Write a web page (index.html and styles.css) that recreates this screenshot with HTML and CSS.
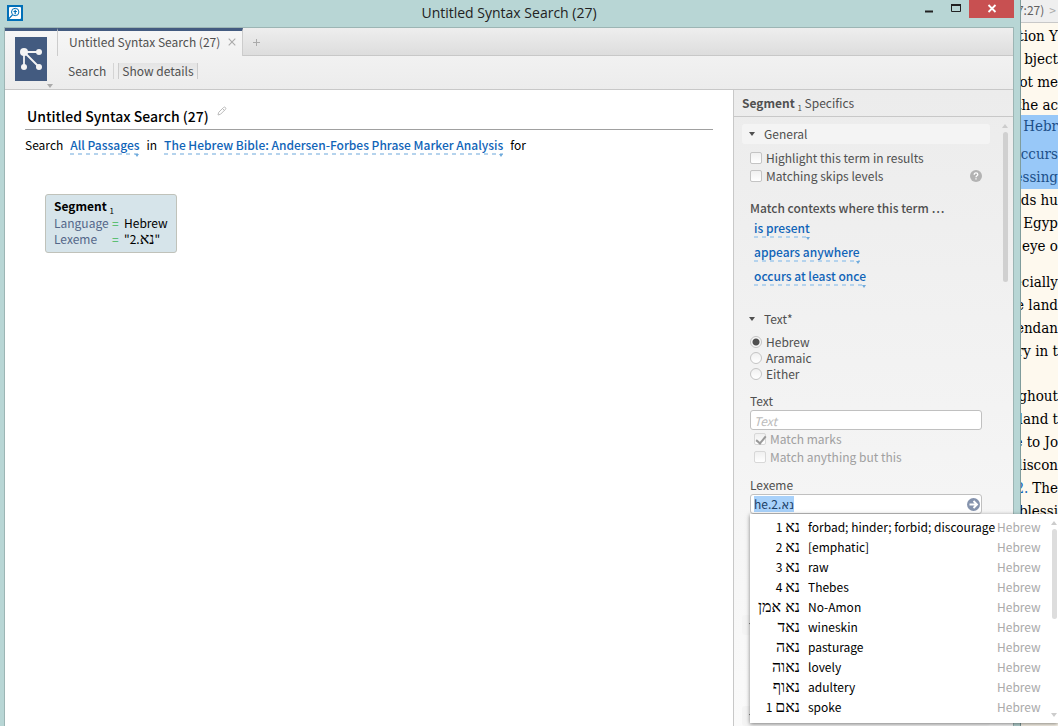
FILE: index.html
```html
<!DOCTYPE html>
<html lang="en">
<head>
  <meta charset="UTF-8">
  <meta name="viewport" content="width=device-width, initial-scale=1.0">
  <title>Untitled Syntax Search (27)</title>
  <link rel="stylesheet" href="styles.css">
</head>
<body>
  <div class="window">
    <div class="titlebar">
      <svg class="app-logo" viewBox="0 0 16 16" width="16" height="16">
        <rect width="16" height="16" fill="#0070b8"/>
        <rect x="2" y="2" width="12" height="12" rx="1" fill="#fff"/>
        <circle cx="8.200" cy="7" r="3.700" fill="none" stroke="#0070b8" stroke-width="1"/>
        <path d="M8.200 4.800v4.400M6.500 6.500h3.400M5.500 9.800L2 13.500" stroke="#0070b8" stroke-width="1.200" fill="none"/>
      </svg>
      <span class="window-title">Untitled Syntax Search (27)</span>
      <div class="window-buttons">
        <button class="win-btn" aria-label="Minimize">
          <svg viewBox="0 0 10 10" width="10" height="10"><path d="M1 7.500h8" stroke="#222" stroke-width="2"/></svg>
        </button>
        <button class="win-btn" aria-label="Maximize">
          <svg viewBox="0 0 10 10" width="10" height="10"><path d="M.5 1.500h9v6h-9z" stroke="#222" fill="none"/><path d="M0 1h10" stroke="#222" stroke-width="2"/></svg>
        </button>
        <button class="win-btn win-close" aria-label="Close">
          <svg viewBox="0 0 10 10" width="10" height="10"><path d="M1.500 1l7 7M8.500 1l-7 7" stroke="#fff" stroke-width="1.800"/></svg>
        </button>
      </div>
    </div>

    <div class="client">
      <header class="header">
        <button class="panel-menu" aria-label="Panel menu">
          <svg class="panel-icon" viewBox="0 0 32 44" width="32" height="44">
            <rect width="32" height="44" fill="#435b80"/>
            <path d="M9 15h15M9 15v15M9 15l15 15" stroke="#f4f4f4" stroke-width="1.800" fill="none"/>
            <g fill="#f4f4f4">
              <circle cx="9" cy="15" r="4"/>
              <circle cx="24" cy="15" r="3"/>
              <circle cx="9" cy="30" r="3"/>
              <circle cx="24" cy="30" r="3"/>
            </g>
          </svg>
          <span class="corner-arrow"></span>
        </button>
        <div class="header-main">
          <div class="tabs">
            <div class="tab">
              <span>Untitled Syntax Search (27)</span>
              <button class="icon-btn" aria-label="Close tab">
                <svg viewBox="0 0 8 8" width="8" height="8"><path d="M.7.7l6.600 6.600M7.300.7L.7 7.300" stroke="#aaa" stroke-width="1.100"/></svg>
              </button>
            </div>
            <div class="tab-rest">
              <button class="icon-btn" aria-label="New tab">
                <svg viewBox="0 0 8 8" width="8" height="8"><path d="M4.500 1v7M1 4.500h7" stroke="#aaa"/></svg>
              </button>
            </div>
          </div>
          <div class="toolbar">
            <button class="tool">Search</button>
            <span class="divider"></span>
            <button class="tool active">Show details</button>
          </div>
        </div>
      </header>

      <div class="content">
        <main class="editor">
          <div class="doc-title">
            <h1>Untitled Syntax Search (27)</h1>
            <svg viewBox="0 0 10 10" width="10" height="10"><path d="M1 9l.7-2.700L6.500 1.500q1-.9 1.900 0t0 1.900L3.600 8.200zM5.500 2.500l2 2" stroke="#bbb" fill="none"/></svg>
          </div>
          <div class="query">
            <span>Search</span>
            <a class="picker" href="#">All Passages</a>
            <span>in</span>
            <a class="picker" href="#">The Hebrew Bible: Andersen-Forbes Phrase Marker Analysis</a>
            <span>for</span>
          </div>
          <div class="term">
            <div class="term-name"><b>Segment</b> <small>1</small></div>
            <div class="term-row"><span class="key">Language</span><span class="eq">=</span><span>Hebrew</span></div>
            <div class="term-row"><span class="key">Lexeme</span><span class="eq">=</span><span>"2.<span class="heb">נא</span>"</span></div>
          </div>
        </main>

        <aside class="specifics">
          <div class="specifics-head"><b>Segment</b> <small>1</small> Specifics</div>
          <div class="specifics-body">
            <div class="scrollbar"><span class="scroll-up"></span><span class="thumb"></span></div>

            <div class="section raised"><span class="twisty"></span>General</div>
            <div class="checks">
              <label class="option"><input type="checkbox">Highlight this term in results</label>
              <div class="option-line">
                <label class="option"><input type="checkbox">Matching skips levels</label>
                <svg viewBox="0 0 12 12" width="12" height="12"><circle cx="6" cy="6" r="6" fill="#b3b3b3"/><path d="M4.200 4.700q0-1.900 1.800-1.900t1.800 1.600q0 .8-.9 1.400t-.9 1.400M6 8.200v1.300" stroke="#fff" stroke-width="1.300" fill="none"/></svg>
              </div>
            </div>

            <div class="contexts">
              <span class="contexts-title">Match contexts where this term …</span>
              <a class="picker" href="#">is present</a>
              <a class="picker" href="#">appears anywhere</a>
              <a class="picker" href="#">occurs at least once</a>
            </div>

            <div class="section"><span class="twisty"></span>Text*</div>
            <div class="radios">
              <label class="option"><input type="radio" name="language" checked>Hebrew</label>
              <label class="option"><input type="radio" name="language">Aramaic</label>
              <label class="option"><input type="radio" name="language">Either</label>
            </div>

            <div class="field">
              <label for="text">Text</label>
              <input class="box" type="text" id="text" placeholder="Text">
              <div class="sub-checks">
                <label class="option"><input type="checkbox" checked disabled>Match marks</label>
                <label class="option"><input type="checkbox" disabled>Match anything but this</label>
              </div>
            </div>

            <div class="field combo">
              <label for="lexeme">Lexeme</label>
              <div class="box combo-box">
                <input type="text" id="lexeme" value="he.2.נא">
                <button class="icon-btn" aria-label="Go">
                  <svg viewBox="0 0 13 13" width="13" height="13"><circle cx="6.500" cy="6.500" r="6.500" fill="#8593ad"/><path d="M2.500 6.500h7M6.500 3l3.500 3.500L6.500 10" stroke="#fff" stroke-width="1.900" fill="none"/></svg>
                </button>
              </div>
              <div class="menu">
                <ul class="menu-list">
                  <li><span class="lemma">1 <span class="heb">נא</span></span><span class="gloss">forbad; hinder; forbid; discourage</span><span class="lang">Hebrew</span></li>
                  <li><span class="lemma">2 <span class="heb">נא</span></span><span class="gloss">[emphatic]</span><span class="lang">Hebrew</span></li>
                  <li><span class="lemma">3 <span class="heb">נא</span></span><span class="gloss">raw</span><span class="lang">Hebrew</span></li>
                  <li><span class="lemma">4 <span class="heb">נא</span></span><span class="gloss">Thebes</span><span class="lang">Hebrew</span></li>
                  <li><span class="lemma"><span class="heb">נא אמן</span></span><span class="gloss">No-Amon</span><span class="lang">Hebrew</span></li>
                  <li><span class="lemma"><span class="heb">נאד</span></span><span class="gloss">wineskin</span><span class="lang">Hebrew</span></li>
                  <li><span class="lemma"><span class="heb">נאה</span></span><span class="gloss">pasturage</span><span class="lang">Hebrew</span></li>
                  <li><span class="lemma"><span class="heb">נאוה</span></span><span class="gloss">lovely</span><span class="lang">Hebrew</span></li>
                  <li><span class="lemma"><span class="heb">נאוף</span></span><span class="gloss">adultery</span><span class="lang">Hebrew</span></li>
                  <li><span class="lemma">1 <span class="heb">נאם</span></span><span class="gloss">spoke</span><span class="lang">Hebrew</span></li>
                </ul>
                <div class="menu-scroll"><span class="scroll-up"></span><span class="thumb"></span><span class="scroll-down"></span></div>
              </div>
            </div>

            <div class="section raised"><span class="twisty"></span></div>
            <div class="section raised"><span class="twisty"></span></div>
          </div>
        </aside>
      </div>
    </div>
  </div>

  <!-- Bible text behind the search window -->
  <div class="reader">
    <div class="reader-bar">7:27) <span>&gt;</span></div>
    <div class="reader-text">
      <p>tion Y</p>
      <p>bject</p>
      <p>not me</p>
      <p>the ac</p>
      <div class="selected">
        <h2>Hebr</h2>
        <p>ccurs</p>
        <p>essing</p>
      </div>
      <p>nds hu</p>
      <p>r Egyp</p>
      <p>s eye o</p>
      <p class="para">ecially</p>
      <p>e land</p>
      <p>endan</p>
      <p>ry in t</p>
      <p class="para verse">ghout</p>
      <p>land t</p>
      <p>e to Jo</p>
      <p>discon</p>
      <p><a href="#">2.</a> The</p>
      <p>blessi</p>
    </div>
  </div>
</body>
</html>
```

FILE: styles.css
```css
* {
  margin: 0;
  padding: 0;
  box-sizing: border-box;
}

body {
  display: flex;
  height: 100vh;
  overflow: hidden;
  background: #fef9ee;
  font-family: "Noto Sans CJK SC", "DejaVu Sans", sans-serif;
  font-size: 12px;
  line-height: 16px;
  color: #000;
}

button,
input {
  font: inherit;
  color: inherit;
  background: none;
  border: none;
  outline: none;
}

svg {
  display: block;
  flex: none;
}

small {
  font-size: 8px;
  vertical-align: -3px;
  line-height: 8px;
}

a {
  color: #1064b8;
  text-decoration: none;
}

.heb {
  font-family: "Liberation Serif", serif;
  font-size: 16px;
  line-height: 12px;
}

/* Window frame */
.window {
  flex: 1;
  min-width: 0;
  display: flex;
  flex-direction: column;
  position: relative;
  z-index: 1;
  padding: 0 6px 0 4px;
  background: #b8d6d5;
  border-right: 1px solid #7f9c9c;
}

.titlebar {
  height: 27px;
  display: flex;
  align-items: center;
  padding: 0 0 2px 3px;
}

.window-title {
  flex: 1;
  padding-left: 80px;
  text-align: center;
  font-family: "Open Sans", sans-serif;
  font-size: 14px;
  color: #222;
}

.window-buttons {
  display: flex;
  align-self: flex-start;
}

.win-btn {
  width: 27px;
  height: 18px;
  display: flex;
  align-items: center;
  justify-content: center;
}

.win-close {
  width: 45px;
  background: #c85051;
}

.client {
  flex: 1;
  min-height: 0;
  display: flex;
  flex-direction: column;
  border: 1px solid #9cb5b4;
  border-bottom: none;
  background: #fff;
}

/* Tabs and toolbar */
.header {
  display: flex;
  height: 62px;
  flex: none;
  background: linear-gradient(#f6f6f6, #ececec);
  border-bottom: 1px solid #c8c8c8;
  color: #505050;
}

.panel-menu {
  width: 52px;
  padding: 6px 0 0 10px;
  border-top: 3px solid #435b80;
  display: flex;
  align-items: flex-start;
}

.corner-arrow {
  align-self: flex-end;
  margin-bottom: 1px;
  border: 3px solid transparent;
  border-top: 4px solid #aaa;
  border-bottom: none;
}

.header-main {
  flex: 1;
  display: flex;
  flex-direction: column;
}

.tabs {
  display: flex;
  height: 28px;
}

.tab {
  display: flex;
  align-items: center;
  gap: 8px;
  padding: 0 6px 4px 11px;
  border-top: 3px solid #435b80;
  border-left: 1px solid #ccc;
  border-right: 1px solid #ccc;
}

.icon-btn {
  display: flex;
  align-items: center;
}

.tab-rest {
  flex: 1;
  display: flex;
  padding-left: 9px;
  background: linear-gradient(#eee, #ddd);
  border-bottom: 1px solid #c8c8c8;
}

.toolbar {
  flex: 1;
  display: flex;
  align-items: center;
  padding: 0 0 3px 11px;
}

.tool.active {
  padding: 0 3px;
  border-left: 1px solid #ccc;
  border-right: 1px solid #ccc;
  background: linear-gradient(#e4e4e4, #f0f0f0);
}

.divider {
  width: 1px;
  height: 16px;
  margin: 0 4px 0 7px;
  background: #d4d4d4;
}

/* Query editor */
.content {
  flex: 1;
  min-height: 0;
  display: flex;
}

.editor {
  flex: 1;
  min-width: 0;
  padding: 14px 20px;
}

.doc-title {
  display: flex;
  gap: 8px;
  height: 26px;
  padding-left: 2px;
  border-bottom: 1px solid #a0a0a0;
}

.doc-title svg {
  margin-top: 2px;
}

h1 {
  font-size: 14px;
  font-weight: 500;
  line-height: 24px;
}

.query {
  display: flex;
  gap: 7px;
  margin-top: 7px;
  white-space: nowrap;
}

.picker {
  position: relative;
  font-weight: 500;
  height: 18px;
  background: repeating-linear-gradient(90deg, #b5d3ed 0 4px, transparent 4px 8px) left bottom / 100% 2px no-repeat;
}

.picker::after {
  content: "";
  position: absolute;
  right: 0;
  bottom: -2px;
  border: 2px solid transparent;
  border-top: 3px solid #6fabdc;
  border-bottom: none;
}

.term {
  width: max-content;
  margin: 39px 0 0 20px;
  padding: 3px 8px 5px;
  border: 1px solid #c0c2ba;
  border-radius: 3px;
  background: #d6e4ea;
}

.term-row {
  display: flex;
  height: 16px;
}

.key {
  width: 58px;
  color: #546789;
}

.eq {
  width: 12px;
  color: #40b858;
}

/* Specifics panel */
.specifics {
  width: 280px;
  flex: none;
  display: flex;
  flex-direction: column;
  border-left: 1px solid #c8c8c8;
  background: linear-gradient(#ececec, #fafafa);
  color: #505050;
}

.specifics-head {
  height: 27px;
  padding: 5px 8px;
  border-bottom: 1px solid #c8c8c8;
}

.specifics-body {
  position: relative;
  padding: 7px 23px 0 8px;
}

.section {
  display: flex;
  align-items: center;
  gap: 9px;
  height: 20px;
  padding-left: 7px;
  border-radius: 3px;
}

.section.raised {
  background: #f4f4f4;
}

.twisty {
  border: 3px solid transparent;
  border-top: 4px solid #505050;
  border-bottom: none;
}

.option {
  display: flex;
  align-items: center;
  gap: 4px;
}

.option input {
  position: relative;
  appearance: none;
  width: 12px;
  height: 12px;
  border: 1px solid #c4c4c4;
  border-radius: 2px;
  background: linear-gradient(#f0f0f0, #fff);
}

.option input[type="radio"] {
  border-radius: 50%;
}

.option input[type="radio"]:checked {
  background: radial-gradient(#505050 3px, #f8f8f8 4px);
}

.option input[type="checkbox"]:checked::after {
  content: "";
  position: absolute;
  top: 0;
  left: 3px;
  width: 4px;
  height: 8px;
  border: solid #999;
  border-width: 0 2px 2px 0;
  transform: rotate(40deg);
}

.option:has(:disabled) {
  color: #a0a0a0;
}

.option :disabled {
  border-color: #d8d8d8;
}

.checks {
  padding: 5px 8px 0;
}

.checks .option,
.sub-checks .option {
  height: 18px;
}

.option-line {
  display: flex;
  align-items: center;
  justify-content: space-between;
}

.contexts {
  display: flex;
  flex-direction: column;
  align-items: flex-start;
  gap: 6px;
  padding: 15px 8px 23px;
}

.contexts-title {
  margin-bottom: -2px;
  font-weight: 500;
}

.contexts .picker {
  margin-left: 4px;
}

.radios {
  padding: 5px 8px 0;
}

.field {
  padding: 11px 8px 0;
}

.field > label {
  display: block;
}

.box {
  display: flex;
  width: 100%;
  height: 20px;
  margin-top: 1px;
  padding: 0 3px;
  border: 1px solid #c0c0c0;
  border-radius: 3px;
  background: #fff;
}

.box::placeholder {
  color: #bbb;
  font-style: italic;
}

.sub-checks {
  padding-left: 4px;
}

.combo {
  position: relative;
}

.combo-box {
  padding-right: 1px;
  justify-content: space-between;
}

.combo-box input {
  field-sizing: content;
  align-self: center;
  height: 16px;
  background: #a8d1fa;
  color: #1c3f66;
}

/* Lexeme suggestions */
.menu {
  position: absolute;
  top: 100%;
  left: 8px;
  z-index: 2;
  width: 308px;
  display: flex;
  background: #fff;
  box-shadow: 0 1px 4px rgba(0, 0, 0, 0.5);
  color: #000;
}

.menu-list {
  flex: 1;
  padding: 3px 0 6px;
  list-style: none;
}

.menu-list li {
  display: flex;
  height: 20px;
  line-height: 20px;
  white-space: nowrap;
}

.lemma {
  width: 50px;
  text-align: right;
}

.gloss {
  flex: 1;
  padding-left: 8px;
}

.lang {
  width: 54px;
  color: #aaa;
}

.menu-scroll,
.scrollbar {
  display: flex;
  flex-direction: column;
  align-items: center;
  gap: 4px;
}

.menu-scroll {
  padding: 7px 1px 6px 0;
}

.scrollbar {
  position: absolute;
  top: 7px;
  right: 5px;
}

.thumb {
  width: 5px;
  height: 150px;
  border-radius: 3px;
  background: #d0d0d0;
}

.menu-scroll .thumb {
  height: 90px;
  background: #ddd;
}

.scroll-up {
  border: 3px solid transparent;
  border-bottom: 4px solid #ccc;
  border-top: none;
}

.scroll-down {
  margin-top: auto;
  border: 3px solid transparent;
  border-top: 4px solid #ccc;
  border-bottom: none;
}

.combo ~ .section {
  margin-top: 101px;
}

.combo ~ .section ~ .section {
  margin-top: 71px;
}

/* Reader behind the window */
.reader {
  width: 37px;
  display: flex;
  flex-direction: column;
  font-family: "DejaVu Serif Condensed", "DejaVu Serif", serif;
  font-size: 15px;
  line-height: 23px;
}

.reader-bar {
  height: 23px;
  display: flex;
  flex: none;
  justify-content: flex-end;
  gap: 5px;
  padding-right: 2px;
  line-height: 19px;
  background: #efefef;
  border-bottom: 1px solid #c8c8c8;
  font-family: "Noto Sans CJK SC", sans-serif;
  font-size: 12px;
  color: #606060;
}

.reader-bar span {
  color: #aaa;
}

.reader-text {
  padding-top: 2px;
}

.reader p,
.reader h2 {
  display: flex;
  justify-content: flex-end;
  gap: 4px;
  white-space: nowrap;
}

.reader h2 {
  height: 28px;
  font-size: 15px;
  font-weight: normal;
  line-height: 22px;
}

.selected {
  margin-top: -2px;
  background: #98c8f8;
  color: #1c4f88;
}

.reader .para {
  margin-top: 13px;
}

.reader .verse {
  margin-top: 22px;
}
```
